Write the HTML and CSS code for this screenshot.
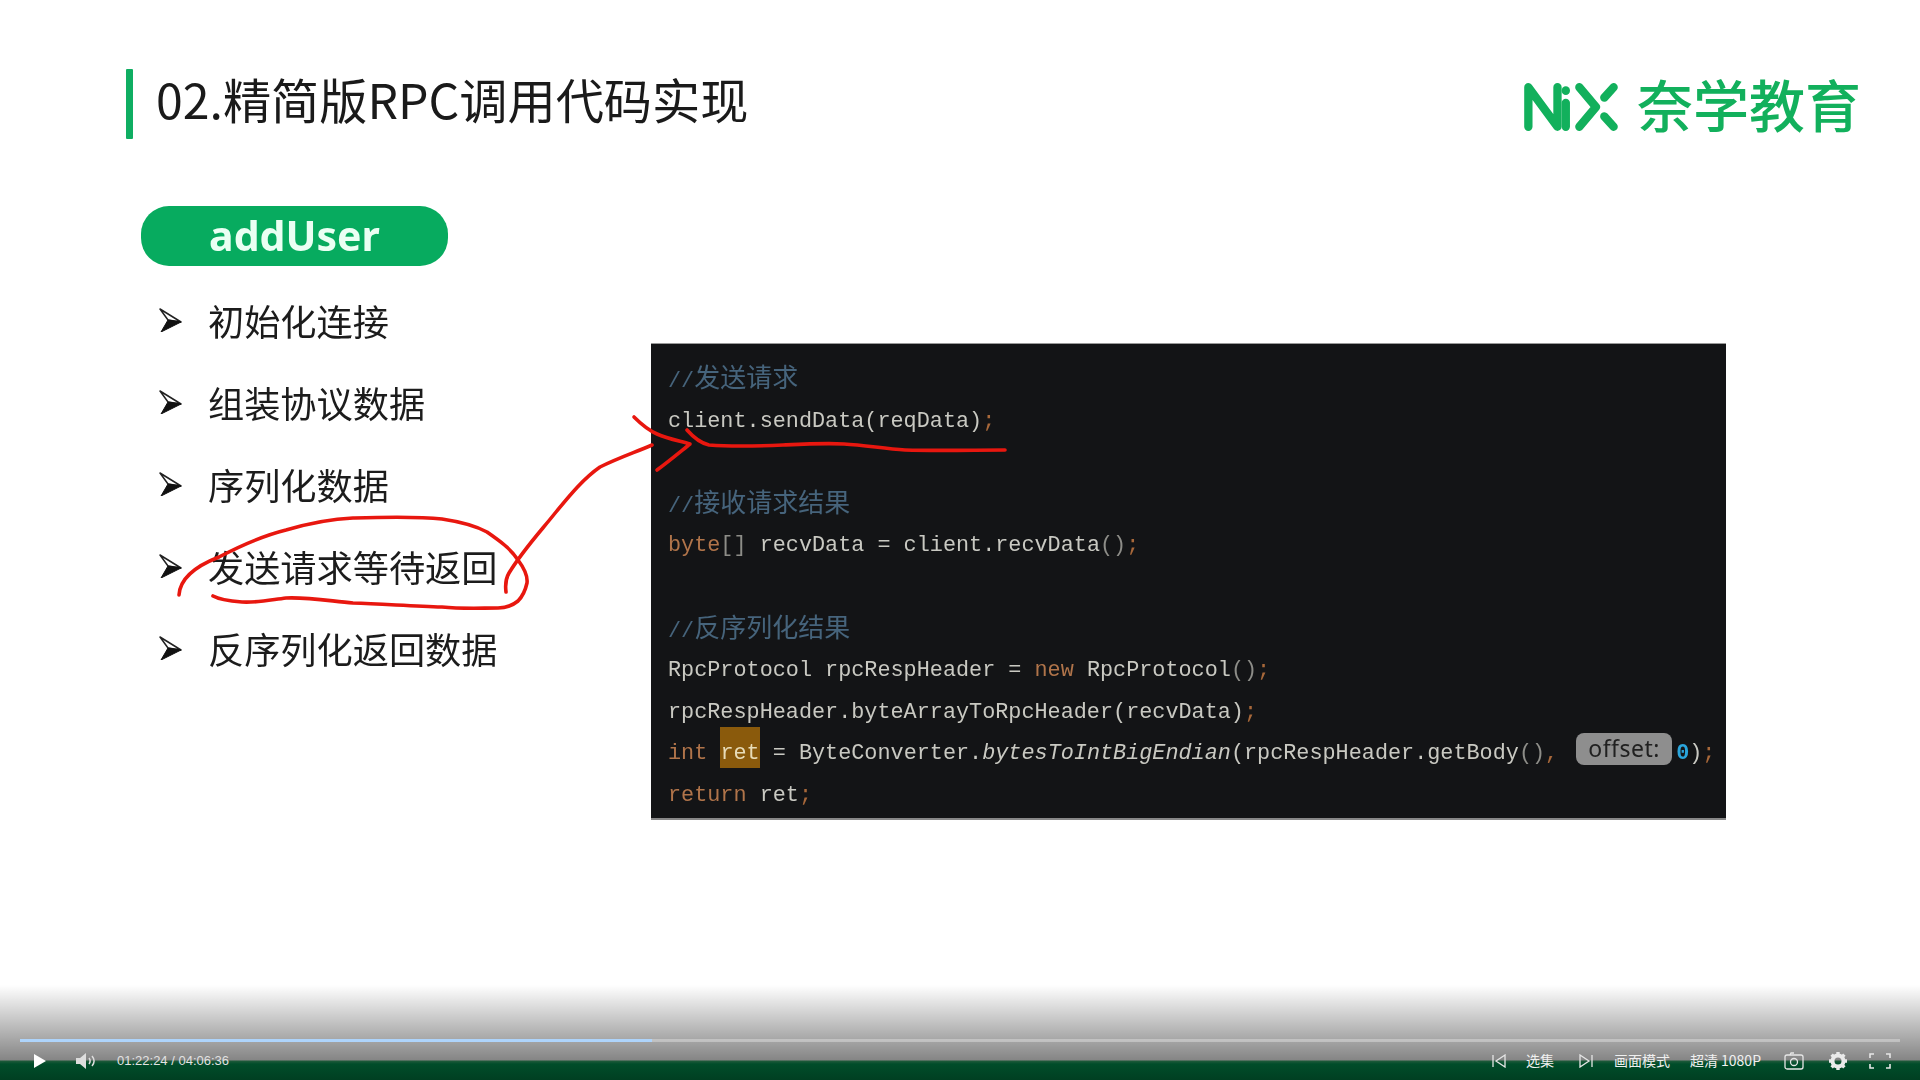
FILE: index.html
```html
<!DOCTYPE html>
<html lang="zh-CN">
<head>
<meta charset="utf-8">
<title>02.精简版RPC调用代码实现</title>
<link rel="stylesheet" href="styles.css">
</head>
<body>
<div class="stage">
  <div class="slide">
    <header class="head">
      <div class="accent"></div>
      <h1 class="title">02.精简版RPC调用代码实现</h1>
      <div class="logo">
        <svg class="logo-mark" width="96" height="52" viewBox="0 0 92 50" role="img" aria-label="NiX">
          <g class="logo-strokes">
            <path d="M5 44V6L33 44V6"/>
            <path d="M41 21V44"/>
            <path d="M41 9V9.500"/>
            <path d="M54 6L70 25L54 44"/>
            <path d="M87 6L78 16"/>
            <path d="M78 34L87 44"/>
          </g>
        </svg>
        <span class="logo-text">奈学教育</span>
      </div>
    </header>
    <main class="body">
      <section class="left">
        <div class="pill">addUser</div>
        <ul class="points">
          <li class="point"><svg class="bullet" width="23" height="24" viewBox="0 0 23 24"><path class="b-up" d="M1 1L22 14L9 12Z"/><path class="b-down" d="M22 14L2 24L9 12Z"/></svg><span>初始化连接</span></li>
          <li class="point"><svg class="bullet" width="23" height="24" viewBox="0 0 23 24"><path class="b-up" d="M1 1L22 14L9 12Z"/><path class="b-down" d="M22 14L2 24L9 12Z"/></svg><span>组装协议数据</span></li>
          <li class="point"><svg class="bullet" width="23" height="24" viewBox="0 0 23 24"><path class="b-up" d="M1 1L22 14L9 12Z"/><path class="b-down" d="M22 14L2 24L9 12Z"/></svg><span>序列化数据</span></li>
          <li class="point"><svg class="bullet" width="23" height="24" viewBox="0 0 23 24"><path class="b-up" d="M1 1L22 14L9 12Z"/><path class="b-down" d="M22 14L2 24L9 12Z"/></svg><span>发送请求等待返回</span></li>
          <li class="point"><svg class="bullet" width="23" height="24" viewBox="0 0 23 24"><path class="b-up" d="M1 1L22 14L9 12Z"/><path class="b-down" d="M22 14L2 24L9 12Z"/></svg><span>反序列化返回数据</span></li>
        </ul>
      </section>
      <section class="code">
        <div class="ln ln-c"><span class="cm">//<span class="zh">发送请求</span></span></div>
        <div class="ln">client.sendData(reqData)<span class="sc">;</span></div>
        <div class="ln"></div>
        <div class="ln ln-c"><span class="cm">//<span class="zh">接收请求结果</span></span></div>
        <div class="ln"><span class="kw">byte</span><span class="dim">[]</span> recvData = client.recvData<span class="dim">()</span><span class="sc">;</span></div>
        <div class="ln"></div>
        <div class="ln ln-c"><span class="cm">//<span class="zh">反序列化结果</span></span></div>
        <div class="ln">RpcProtocol rpcRespHeader = <span class="kw">new</span> RpcProtocol<span class="dim">()</span><span class="sc">;</span></div>
        <div class="ln">rpcRespHeader.byteArrayToRpcHeader(recvData)<span class="sc">;</span></div>
        <div class="ln"><span class="kw">int</span> <span class="hl">ret</span> = ByteConverter.<em class="it">bytesToIntBigEndian</em>(rpcRespHeader.getBody<span class="dim">()</span><span class="sc">,</span><span class="hint">offset:</span><span class="num">0</span>)<span class="sc">;</span></div>
        <div class="ln"><span class="kw">return</span> ret<span class="sc">;</span></div>
      </section>
    </main>
  </div>

  <svg class="ink" width="1920" height="1080" viewBox="0 0 1920 1080" aria-hidden="true">
    <path d="M179 595C180 578 196 566 219 557C240 546 262 536 286 530C310 523 330 519 353 518C385 517 415 516 442 519C462 522 476 526 487 532C500 541 511 549 518 560C524 568 528 575 527 583C525 592 522 597 518 601C512 606 507 608 498 608C480 608 462 609 442 607C412 606 382 604 353 603C330 601 308 597 286 598C270 600 256 603 242 602C230 601 220 600 213 596"/>
    <path d="M506 592C505 584 506 578 509 573C523 550 540 532 556 512C570 495 584 478 600 467C618 458 636 452 652 445"/>
    <path d="M634 417C642 425 648 430 657 434C668 439 680 441 690 444C680 452 668 462 657 470"/>
    <path d="M687 430C694 438 700 443 709 445C735 447 760 446 783 445C805 444 825 443 844 444C865 445 885 449 905 450C940 451 975 450 1005 450"/>
  </svg>

  <footer class="player">
    <div class="track"><div class="fill" style="width:632px"></div></div>
    <div class="controls">
      <svg class="ic-play" width="12" height="14" viewBox="0 0 12 14"><path d="M0 0L12 7L0 14Z"/></svg>
      <svg class="ic-vol" width="20" height="16" viewBox="0 0 20 16"><path class="fill-grey" d="M0 5H4L10 0V16L4 11H0Z"/><path class="line-grey" d="M13 5C14.500 7 14.500 9 13 11"/><path class="line-grey" d="M16 3C18.500 6 18.500 10 16 13"/></svg>
      <span class="time">01:22:24 / 04:06:36</span>
      <div class="right">
        <svg class="ic" width="14" height="14" viewBox="0 0 14 14"><path d="M1 1V13"/><path d="M13 1L4 7L13 13Z"/></svg>
        <span class="lab lab-a">选集</span>
        <svg class="ic ic-b" width="14" height="14" viewBox="0 0 14 14"><path d="M13 1V13"/><path d="M1 1L10 7L1 13Z"/></svg>
        <span class="lab lab-c">画面模式</span>
        <span class="lab lab-d">超清 1080P</span>
        <svg class="ic ic-e" width="20" height="18" viewBox="0 0 20 18"><rect x="1" y="3" width="18" height="14" rx="2"/><circle cx="10" cy="10" r="3.500"/><path d="M6 3L7 1H10"/></svg>
        <svg class="ic ic-f" width="20" height="20" viewBox="0 0 20 20"><circle class="gear" cx="10" cy="10" r="5.500"/><path class="teeth" d="M10 1V4M10 16V19M1 10H4M16 10H19M3.600 3.600L5.800 5.800M14.200 14.200L16.400 16.400M3.600 16.400L5.800 14.200M14.200 5.800L16.400 3.600"/></svg>
        <svg class="ic ic-g" width="22" height="16" viewBox="0 0 22 16"><path d="M1 5V1H5M17 1H21V5M21 11V15H17M5 15H1V11"/></svg>
      </div>
    </div>
  </footer>
</div>
</body>
</html>
```

FILE: styles.css
```css
* { box-sizing: border-box; }
html, body { margin: 0; padding: 0; background: #fff; }
.stage { position: relative; width: 1920px; height: 1080px; overflow: hidden; background: #fff; }
.slide { filter: blur(0.5px); }

.head { display: flex; align-items: flex-start; padding: 69px 59px 0 126px; height: 206px; }
.accent { width: 7px; height: 70px; background: #0fae62; border-radius: 1px; }
.title { margin: -4px 0 0 23px; font: 400 48.200px/66px "Noto Sans CJK SC", "Noto Sans", sans-serif; color: #1a1a1a; white-space: nowrap; }
.logo { margin-left: auto; margin-top: 6px; display: flex; align-items: center; }
.logo-mark { display: block; }
.logo-strokes path { fill: none; stroke: #12b05c; stroke-width: 8; stroke-linecap: round; stroke-linejoin: round; }
.logo-text { margin-left: 18px; margin-bottom: 8px; font: 500 56px/56px "Noto Sans CJK SC", sans-serif; color: #12b05c; white-space: nowrap; }

.body { display: flex; padding-left: 141px; }
.left { width: 510px; }
.pill { width: 307px; height: 60px; border-radius: 28px; background: #07ab5f; color: #eafff3; font: 700 41px/58px "Noto Sans", sans-serif; text-align: center; }
.points { list-style: none; margin: 13px 0 0; padding: 0 0 0 18px; }
.point { display: flex; align-items: center; height: 82px; font: 400 36.200px/46px "Noto Sans CJK SC", sans-serif; color: #1c1c1c; }
.bullet { flex: none; margin-right: 26px; }
.b-up { fill: #fff; stroke: #222; stroke-width: 1.5; stroke-linejoin: round; }
.b-down { fill: #111; stroke: #111; stroke-width: 1; }

.code { width: 1075px; height: 477px; margin-top: 137px; padding: 15px 0 0 17px; background: #131416; border-top: 1px solid #999; border-bottom: 2px solid #888; color: #c9c9c2; font: 400 21.820px/41.600px "Liberation Mono", "Noto Sans CJK SC", monospace; }
.ln { height: 41.600px; white-space: pre; }
.ln-c { line-height: 33px; }
.cm { color: #46647c; }
.zh { font-family: "Noto Sans CJK SC", sans-serif; font-size: 26px; line-height: 33px; }
.kw { color: #b0744a; }
.sc { color: #a8683a; }
.dim { color: #8d8d88; }
.hl { position: relative; z-index: 0; color: #e8dcb8; }
.hl::before { content: ""; position: absolute; z-index: -1; left: 0; right: 0; top: -14px; height: 41px; background: #8a5a0c; }
.it { font-style: italic; }
.hint { display: inline-block; margin-left: 18px; margin-right: 4px; width: 96px; height: 32px; border-radius: 8px; background: #8e8e8e; color: #202020; font: 400 23px/30px "Noto Sans", sans-serif; text-align: center; vertical-align: 2px; letter-spacing: 0.5px; }
.num { color: #2aa5dc; font-weight: 700; }

.ink { position: absolute; left: 0; top: 0; pointer-events: none; }
.ink path { fill: none; stroke: #e8170f; stroke-width: 3.600; stroke-linecap: round; stroke-linejoin: round; }

.player { position: absolute; left: 0; right: 0; bottom: 0; height: 95px; padding-top: 54px; background: linear-gradient(180deg, rgba(0,0,0,0) 0, rgba(0,0,0,0.48) 75px, #1e5a3a 76px, #004d2a 79px, #003f22 95px); }
.track { height: 3px; margin: 0 20px; background: rgba(255,255,255,0.32); }
.fill { height: 3px; background: #aed4fb; }
.controls { display: flex; align-items: center; height: 38px; padding-left: 34px; }
.ic-play path { fill: #fff; }
.ic-vol { margin-left: 30px; }
.fill-grey { fill: #ddd; }
.line-grey { fill: none; stroke: #ddd; stroke-width: 1.5; }
.time { margin-left: 21px; font: 400 13px/16px "Liberation Sans", sans-serif; color: #e2e2e2; white-space: nowrap; }
.right { display: flex; align-items: center; margin-left: auto; padding-right: 29px; }
.ic { display: block; }
.ic path, .ic rect, .ic circle { fill: none; stroke: #e6e6e6; stroke-width: 1.3; }
.lab { font: 400 14px/18px "Noto Sans CJK SC", "Liberation Sans", sans-serif; color: #f0f0f0; white-space: nowrap; padding-bottom: 2px; }
.lab-a { margin-left: 20px; }
.ic-b { margin-left: 25px; }
.lab-c { margin-left: 21px; }
.lab-d { margin-left: 20px; }
.ic-e { margin-left: 23px; }
.ic-f { margin-left: 24px; }
.ic .gear { fill: none; stroke: #eaeaea; stroke-width: 4; }
.ic .teeth { stroke: #eaeaea; stroke-width: 3.400; }
.ic-g { margin-left: 21px; }
.ic-g path { stroke-width: 1.600; }
```
